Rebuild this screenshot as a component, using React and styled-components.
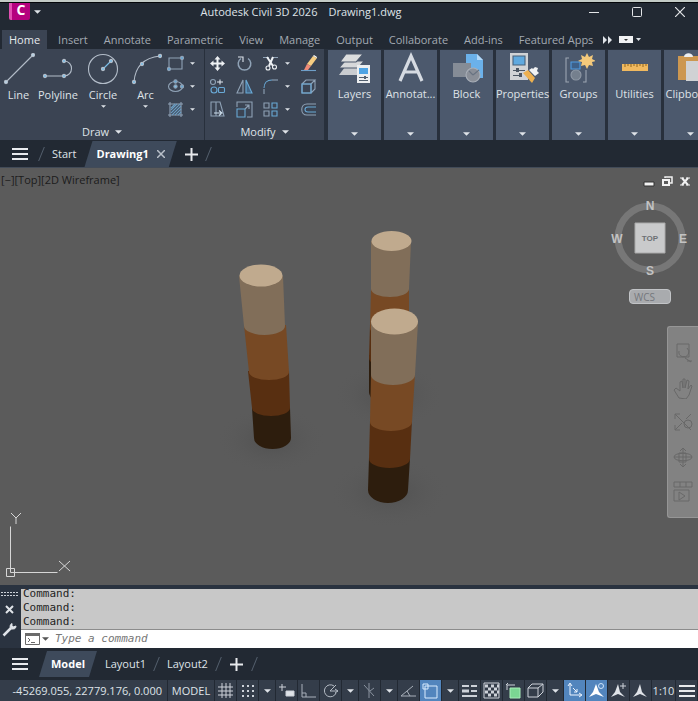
import React, { useState } from 'react';
import styled, { createGlobalStyle, css } from 'styled-components';

const GlobalStyle = createGlobalStyle`
  * {
    box-sizing: border-box;
  }
  body {
    margin: 0;
    background: #222933;
    font-family: "Open Sans", "Noto Sans", sans-serif;
    font-size: 11px;
    line-height: 16px;
    color: #dfe3e8;
  }
  button, input {
    font: inherit;
    color: inherit;
    border: 0;
    margin: 0;
    padding: 0;
    background: none;
  }
  svg {
    display: block;
    flex: none;
  }
`;

const Window = styled.div`
  display: flex;
  flex-direction: column;
  min-height: 100vh;
  overflow: hidden;
  background: #222933;
  border-top: 2px solid #c3cbc6;
`;

/* ---------- title bar ---------- */

const TitleBar = styled.header`
  display: flex;
  align-items: flex-start;
  height: 28px;
  border-top: 1px solid #05070a;
`;

const AppButton = styled.button`
  display: flex;
  align-items: center;
  gap: 4px;
  padding-left: 9px;
  width: 45px;
`;

const AppLogo = styled.span`
  width: 21px;
  height: 17px;
  background: #b5007e;
  border-left: 3px solid #e14fb2;
  border-radius: 0 0 2px 2px;
  color: #fff;
  font-size: 14px;
  font-weight: 700;
  line-height: 14px;
`;

const Title = styled.h1`
  flex: 1;
  display: flex;
  justify-content: center;
  gap: 11px;
  margin: 0;
  padding: 1px 19px 0 0;
  font-size: 11px;
  font-weight: 400;
  white-space: nowrap;
`;

const WindowButtons = styled.div`
  display: flex;
  gap: 7px;
`;

const WindowButton = styled.button`
  display: flex;
  justify-content: center;
  align-items: center;
  width: 36px;
  height: 18px;
`;

/* ---------- ribbon ---------- */

const RibbonTabs = styled.nav`
  display: flex;
  height: 19px;
  padding-left: 2px;
  white-space: nowrap;
`;

const RibbonTab = styled.button`
  flex: none;
  height: 19px;
  padding: 0 ${p => (p.$active ? '7px' : '8px')};
  margin-right: ${p => (p.$active ? '3px' : '0')};
  color: ${p => (p.$active ? '#e6e9ed' : '#a3a9b2')};
  background: ${p => (p.$active ? '#3b4453' : 'transparent')};
`;

const TabTools = styled.div`
  display: flex;
  align-items: center;
  gap: 5px;
  padding-left: 2px;
`;

const Ribbon = styled.section`
  display: flex;
  height: 91px;
  overflow: hidden;
  background: #28303c;
`;

const Panel = styled.div`
  display: flex;
  flex-direction: column;
  flex: none;
  width: ${p => p.$width};
  margin-right: ${p => p.$gap || '1px'};
  background: #3b4453;
`;

const PanelBody = styled.div`
  display: flex;
  flex: 1;
  padding-top: 3px;
`;

const PanelTitle = styled.button`
  display: flex;
  justify-content: center;
  align-items: center;
  gap: 6px;
  height: 16px;
`;

const BigTool = styled.button`
  display: flex;
  flex-direction: column;
  align-items: center;
  flex: none;
  width: ${p => p.$width};
  height: 62px;
  padding-top: 1px;
  gap: 2px;
`;

const ToolGrid = styled.div`
  display: grid;
  grid-template-columns: ${p => p.$columns};
  grid-auto-rows: 23px;
  align-content: start;
`;

const SmallTool = styled.button`
  display: flex;
  align-items: center;
  justify-content: ${p => (p.$menu ? 'flex-start' : 'center')};
  gap: 6px;
  padding-left: ${p => (p.$menu ? '3px' : '0')};
`;

const Tile = styled.button`
  display: flex;
  flex-direction: column;
  align-items: center;
  flex: none;
  gap: 2px;
  width: 53px;
  height: 90px;
  margin: 1px 3px 0 0;
  padding: 2px 0 4px;
  background: #4c596d;
  white-space: nowrap;
  span {
    flex: 1;
  }
`;

/* ---------- slanted tab rows ---------- */

const SheetTabs = styled.nav`
  display: flex;
  align-items: flex-end;
  height: ${p => p.$height};
  background: #222933;
`;

const MenuButton = styled.button`
  display: flex;
  align-items: center;
  justify-content: center;
  width: ${p => p.$width};
  height: 26px;
`;

const SheetTab = styled.button`
  display: flex;
  align-items: center;
  justify-content: center;
  gap: 8px;
  height: 26px;
  padding: 0 ${p => (p.$active ? '12px' : '8px')};
  ${p =>
    p.$active &&
    css`
      background: #3e4a5b;
      color: #fff;
      font-weight: 700;
      clip-path: polygon(8px 0, 100% 0, calc(100% - 8px) 100%, 0 100%);
    `}
`;

const Slash = styled.span`
  width: 1px;
  height: 14px;
  margin: 0 2px 6px;
  background: #55606e;
  transform: skewX(-22deg);
`;

/* ---------- model view ---------- */

const Viewport = styled.main`
  position: relative;
  flex: 1;
  min-height: 300px;
  background: #5b5b5b;
  border-top: 1px solid #424b58;
`;

const Scene = styled.svg`
  position: absolute;
  inset: 0;
  width: 100%;
  height: 100%;
`;

const ViewLabel = styled.div`
  position: absolute;
  top: 4px;
  left: 1px;
  color: #1c1c1c;
`;

const ViewButtons = styled.div`
  position: absolute;
  top: 8px;
  right: 7px;
  display: flex;
  gap: 6px;
`;

const Compass = styled.div`
  position: absolute;
  top: 30px;
  right: 8px;
  display: flex;
  flex-direction: column;
  align-items: center;
  gap: 11px;
`;

const WcsButton = styled.button`
  width: 42px;
  height: 15px;
  padding-left: 4px;
  border: 1px solid #c2c4c7;
  border-radius: 4px;
  background: #a9abae;
  color: #74777c;
  font-size: 10px;
  line-height: 12px;
  text-align: left;
`;

const NavBar = styled.div`
  position: absolute;
  top: 158px;
  right: 0;
  display: flex;
  flex-direction: column;
  align-items: center;
  justify-content: space-between;
  width: 31px;
  height: 192px;
  padding: 16px 0 15px;
  background: #828282;
  border: 1px solid #969696;
  border-right: 0;
  border-radius: 3px 0 0 3px;
`;

const UcsIcon = styled.svg`
  position: absolute;
  left: 3px;
  bottom: 3px;
`;

/* ---------- command line ---------- */

const CommandPanel = styled.section`
  display: flex;
  height: 63px;
  padding-top: 4px;
  background: #2a3340;
`;

const CommandSide = styled.div`
  display: flex;
  flex-direction: column;
  align-items: center;
  width: 21px;
  padding: 3px 2px 0 0;
  gap: 8px;
`;

const CommandMain = styled.div`
  flex: 1;
  display: flex;
  flex-direction: column;
  font-family: "DejaVu Sans Mono", monospace;
  line-height: 14px;
`;

const CommandLog = styled.div`
  display: flex;
  flex-direction: column;
  justify-content: flex-end;
  height: 40px;
  padding-left: 2px;
  overflow: hidden;
  background: #c8c8c8;
  color: #1f1f1f;
`;

const CommandEntry = styled.label`
  display: flex;
  align-items: center;
  flex: 1;
  gap: 2px;
  padding-left: 4px;
  background: #fff;
  border-top: 1px solid #8c8c8c;
  input {
    flex: 1;
    margin-left: 4px;
    outline: 0;
    color: #222;
  }
  input::placeholder {
    color: #777;
    font-style: italic;
    opacity: 1;
  }
`;

/* ---------- status bar ---------- */

const StatusBar = styled.footer`
  display: flex;
  height: 21px;
  margin-top: 3px;
  background: #222933;
  white-space: nowrap;
`;

const Coordinates = styled.button`
  flex: 1;
  margin-right: 1px;
  padding-right: 5px;
  background: #343d4a;
  text-align: right;
`;

const StatusText = styled.button`
  flex: none;
  width: ${p => p.$width};
  margin-right: 1px;
  background: #343d4a;
`;

const StatusButton = styled.button`
  display: flex;
  align-items: center;
  justify-content: center;
  flex: none;
  width: 21px;
  margin-right: 1px;
  background: ${p => (p.$active ? '#5285bd' : '#343d4a')};
`;

const StatusCaret = styled(StatusButton)`
  width: 16px;
`;

/* ---------- drawings ---------- */

const Caret = ({ size = 7, color = '#dfe3e8' }) => (
  <svg width={size} height={size / 2 + 0.5} viewBox="0 0 8 4" fill={color}>
    <path d="M0 0h8L4 4z" />
  </svg>
);

const Dot = ({ x, y, fill = '#7cc0ea' }) => <circle cx={x} cy={y} r="1.6" fill={fill} />;

const BigIcon = ({ children }) => (
  <svg width="32" height="32" viewBox="0 0 32 32" fill="none" stroke="#b3bdc9" strokeWidth="1.1">
    {children}
  </svg>
);

const SmallIcon = ({ children }) => (
  <svg width="17" height="17" viewBox="0 0 17 17" fill="none" stroke="#8fa2b6" strokeWidth="1.1">
    {children}
  </svg>
);

const BarsIcon = () => (
  <svg width="16" height="12" viewBox="0 0 16 12" fill="#e8eaed">
    <path d="M0 0h16v2H0zM0 5h16v2H0zM0 10h16v2H0z" />
  </svg>
);

const PlusIcon = () => (
  <svg width="13" height="13" viewBox="0 0 13 13" stroke="#e8eaed" strokeWidth="2">
    <path d="M6.5 0v13M0 6.5h13" />
  </svg>
);

const drawTools = [
  {
    name: 'Line',
    width: '37px',
    icon: (
      <>
        <path d="M3 29L30 2" />
        <Dot x={3} y={29} fill="#b9d3e6" />
        <Dot x={30} y={2} fill="#b9d3e6" />
      </>
    ),
  },
  {
    name: 'Polyline',
    width: '42px',
    icon: (
      <>
        <path d="M2 23h20c10 0 10-15 0-15" />
        <Dot x={3} y={23} />
        <Dot x={22} y={23} />
        <Dot x={22} y={8} />
      </>
    ),
  },
  {
    name: 'Circle',
    width: '48px',
    menu: true,
    icon: (
      <>
        <circle cx="16" cy="16" r="14.5" />
        <path d="M16 16l8-8" stroke="#7cc0ea" />
        <Dot x={16} y={16} />
        <Dot x={24} y={8} />
      </>
    ),
  },
  {
    name: 'Arc',
    width: '37px',
    menu: true,
    icon: (
      <>
        <path d="M4 29C5 15 12 5 30 3" />
        <Dot x={4} y={29} />
        <Dot x={12} y={11} />
        <Dot x={30} y={3} />
      </>
    ),
  },
];

const shapeTools = [
  {
    name: 'Rectangle',
    icon: (
      <>
        <path d="M2 3h13v11H2z" />
        <Dot x={2} y={14} fill="#69a9d6" />
        <Dot x={15} y={3} fill="#69a9d6" />
      </>
    ),
  },
  {
    name: 'Ellipse',
    icon: (
      <>
        <ellipse cx="8.500" cy="8.500" rx="7" ry="5" />
        <Dot x={8.5} y={8.5} />
        <Dot x={8.5} y={3.5} fill="#69a9d6" />
        <Dot x={15} y={8.5} fill="#69a9d6" />
      </>
    ),
  },
  {
    name: 'Hatch',
    icon: (
      <>
        <path d="M3 1v15M14 1v15M1 3h15M1 14h15" />
        <path
          d="M4 7l4-4M4 9l6-6M4 12l9-9M5 14l9-9M8 14l6-6M11 14l3-3"
          stroke="#6b9cc0"
        />
      </>
    ),
  },
];

const modifyTools = [
  {
    name: 'Move',
    icon: (
      <g fill="#eef1f4" stroke="none">
        <path d="M8.500 1l3 3.500h-2V7.500h3v-2L16 8.500l-3.500 3v-2h-3v3h2L8.500 16l-3-3.500h2v-3h-3v2L1 8.500l3.500-3v2h3v-3h-2z" />
      </g>
    ),
  },
  {
    name: 'Rotate',
    icon: (
      <>
        <path d="M5 3.500A6.300 6.300 0 1 0 12 3.500" strokeWidth="1.500" />
        <path d="M2 2l5 0v5" stroke="#dfe6ee" />
      </>
    ),
  },
  {
    name: 'Trim',
    menu: true,
    icon: (
      <>
        <path d="M1 2.500h6M11 2.500h5" />
        <path d="M5 2l6 9M11 2L7 11" stroke="#eef1f4" strokeWidth="2" />
        <circle cx="6" cy="13" r="2" stroke="#eef1f4" />
        <circle cx="12.500" cy="12" r="2" stroke="#eef1f4" />
      </>
    ),
  },
  {
    name: 'Erase',
    icon: (
      <>
        <path d="M1 15.500h15" stroke="#6f9fc8" />
        <path d="M13 1l4 2-6 8-4-2z" fill="#f6cd82" stroke="none" />
        <path d="M7 9l4 2-3 4H4z" fill="#ef8b77" stroke="none" />
        <path d="M13 1l1-1 3 2v1z" fill="#fff" stroke="none" />
      </>
    ),
  },
  {
    name: 'Copy',
    icon: (
      <>
        <circle cx="4" cy="4" r="2.500" />
        <circle cx="5" cy="12" r="3" stroke="#69a9d6" />
        <rect x="9.500" y="9.500" width="6" height="5" rx="1" stroke="#69a9d6" />
        <path d="M8 4h6M11 1.500v5" stroke="#dfe6ee" />
      </>
    ),
  },
  {
    name: 'Mirror',
    icon: (
      <>
        <path d="M7 2v13H1z" />
        <path d="M10 2v13h6z" stroke="#69a9d6" fill="#44688a" />
      </>
    ),
  },
  {
    name: 'Fillet',
    menu: true,
    icon: (
      <>
        <path d="M2 16v-5" />
        <path d="M2 10C2 5 5 2 10 2" stroke="#69a9d6" />
        <path d="M10 2h6" />
      </>
    ),
  },
  {
    name: 'Explode',
    icon: (
      <>
        <path d="M2 6h9v9H2zM2 6l4-4h9l-4 4M15 2v9l-4 4" />
        <path d="M2 6h9v9H2z" stroke="#69a9d6" />
      </>
    ),
  },
  {
    name: 'Stretch',
    icon: (
      <>
        <path d="M2 1h5v14H2zM7 1h4l4 14H2" />
        <path d="M5 12h7M10 9.500l3 2.500-3 2.500" stroke="#cfe0ee" />
      </>
    ),
  },
  {
    name: 'Scale',
    icon: (
      <>
        <path d="M1 6V1h15v15h-5" />
        <path d="M1 8h8v8H1z" stroke="#69a9d6" />
        <path d="M9 8l4-4M9 4h4v4" />
      </>
    ),
  },
  {
    name: 'Array',
    menu: true,
    icon: (
      <>
        <path d="M2 2h5v5H2zM2 10h5v5H2z" />
        <path d="M10 2h5v5h-5zM10 10h5v5h-5z" stroke="#69a9d6" />
      </>
    ),
  },
  {
    name: 'Offset',
    icon: (
      <>
        <path d="M16 3H7C0 3 0 14 7 14h9" />
        <path d="M16 6H8c-4 0-4 5 0 5h8" stroke="#69a9d6" />
      </>
    ),
  },
];

const tiles = [
  {
    name: 'Layers',
    icon: (
      <g stroke="none">
        <path d="M6 15h20l-7 8H0z" fill="#c9ccd0" />
        <path d="M6 9h19l-6 7H0z" fill="#d6d8da" stroke="#4c596d" />
        <path d="M7 2h17l-7 8H1z" fill="#dcdedf" stroke="#4c596d" />
        <path d="M18 13h13v18H18z" fill="#eceef0" />
        <path d="M20 16h9v6h-9z" fill="#4da3e4" />
        <path d="M20 25h9v1h-9zM20 28h9v1h-9zM25 24h2v3h-2z" fill="#52606f" />
      </g>
    ),
  },
  {
    name: 'Annotat...',
    icon: <path d="M5 29L16 4 27 29M9 20h14" stroke="#d6dbe2" strokeWidth="3.200" />,
  },
  {
    name: 'Block',
    icon: (
      <g stroke="none">
        <path d="M15 2h11l6 6v18H15z" fill="#6bb1ea" />
        <path d="M26 2v6h6z" fill="#b5dafa" />
        <path d="M2 11h18v14H2z" fill="#858c96" />
        <circle cx="22" cy="23" r="7" fill="#8a8f98" stroke="#a9afb8" />
        <path d="M22 23l6-5M22 23l-4-4" stroke="#687382" fill="none" />
      </g>
    ),
  },
  {
    name: 'Properties',
    icon: (
      <g stroke="none">
        <path d="M3 1h18v27H3z" fill="#d0d3d6" />
        <path d="M6 4h12v9H6z" fill="#5fa9df" stroke="#49627a" />
        <path d="M6 18h12v1H6zM6 23h9v1H6z" fill="#4b5663" />
        <path d="M9 16h3v4H9zM12 21h3v4h-3z" fill="#4b5663" />
        <path d="M16 21l5-3 7 8-3 5z" fill="#edb04f" />
        <path d="M22 18l6 6 4-3-2-2 1-3-3-1-2 2-1-1z" fill="#f1f2f3" />
      </g>
    ),
  },
  {
    name: 'Groups',
    icon: (
      <>
        <path d="M6 6H3v24h3M20 30h3V18" stroke="#9ba5b2" />
        <path d="M8 10h9v7H8z" stroke="#4e9be2" fill="#3e6088" />
        <circle cx="13" cy="23" r="5" fill="#75808e" stroke="#8e98a5" />
        <path
          d="M24 1l2 4 4-2-1 4 4 2-4 1 1 4-4-1-2 4-2-4-4 1 1-4-4-1 4-2-1-4 4 2z"
          fill="#f3c97b"
          stroke="none"
        />
      </>
    ),
  },
  {
    name: 'Utilities',
    icon: (
      <>
        <path d="M3 12h26v7H3z" fill="#f0b95f" stroke="none" />
        <path d="M6 12v3M9 12v2M12 12v3M15 12v2M18 12v3M21 12v2M24 12v3M27 12v2" stroke="#9a6d24" />
      </>
    ),
  },
  {
    name: 'Clipboard',
    icon: (
      <g stroke="none">
        <path d="M3 4h22v24H3z" fill="#cc9750" />
        <path d="M9 5c0-5 9-5 9 0z" fill="#eceef0" />
        <path d="M11 9h20v20H11z" fill="#d0d2d4" />
      </g>
    ),
  },
];

// top: cx, cy, rx, ry of the head; every band: left x, right x, y at its start and end, and its sag
const piles = [
  {
    top: [391.5, 241, 20, 10],
    bands: [
      { color: '#2d1d0d', from: [369, 408, 355], to: [369, 407, 392], sag: 12 },
      { color: '#582f11', from: [370, 409, 325], to: [369, 408, 358], sag: 9 },
      { color: '#774924', from: [371, 409, 289], to: [370, 409, 328], sag: 9 },
      { color: '#816e59', from: [371, 411, 241], to: [371, 409, 289], sag: 8 },
    ],
  },
  {
    top: [261, 275.5, 21.5, 11],
    bands: [
      { color: '#2d1d0d', from: [252, 290, 408], to: [254, 291, 438], sag: 11 },
      { color: '#582f11', from: [248, 289, 371], to: [252, 290, 408], sag: 8 },
      { color: '#774924', from: [244, 286, 325], to: [249, 289, 372], sag: 8 },
      { color: '#816e59', from: [239, 283, 276], to: [244, 285, 326], sag: 9 },
    ],
  },
  {
    top: [394.5, 321.5, 23.5, 13],
    bands: [
      { color: '#2d1d0d', from: [369, 410, 458], to: [368, 408, 490], sag: 13 },
      { color: '#582f11', from: [370, 412, 421], to: [369, 410, 459], sag: 9 },
      { color: '#774924', from: [371, 415, 374], to: [370, 412, 422], sag: 9 },
      { color: '#816e59', from: [371, 418, 322], to: [371, 415, 375], sag: 10 },
    ],
  },
];

function Pile({ top, bands }) {
  const [cx, cy, rx, ry] = top;
  return (
    <g>
      {bands.map(({ color, from, to, sag }) => (
        <path
          key={color}
          fill={color}
          d={`M${from[0]} ${from[2]}L${to[0]} ${to[2]}A${(to[1] - to[0]) / 2} ${sag} 0 0 0 ${to[1]} ${to[2]}L${from[1]} ${from[2]}z`}
        />
      ))}
      <ellipse cx={cx} cy={cy} rx={rx} ry={ry} fill="#c0aa8e" />
    </g>
  );
}

const navTools = [
  { name: 'Full navigation wheel', d: 'M4 1h12v13H4zM6 8a5 5 0 1 0 8-3M12 15l6 4M14 18h5' },
  { name: 'Pan', d: 'M6 20l-5-8 2-2 4 3V4l2-1 1 7V1h2v9l2-8 2 1-1 8 3-4 1 1-3 9-3 4z' },
  { name: 'Zoom extents', d: 'M2 2l16 16M2 7V2h5M2 18l7-7M2 13v5h5M18 2l-5 5M11 12a4 4 0 1 0 8 0 4 4 0 0 0-8 0' },
  { name: 'Orbit', d: 'M10 1v19M7 4l3-3 3 3M7 17l3 3 3-3M1 10h18M1 10c0-5 18-5 18 0s-18 5-18 0M6 6v9h7V6z' },
  { name: 'Show motion', d: 'M1 1h18v5H1zM7 1v5M13 1v5M1 9h15v11H1zM6 11l6 4-6 4z' },
];

const statusTools = [
  { name: 'Grid', icon: <path d="M1 5h15M1 9h15M1 13h15M5 1v15M9 1v15M13 1v15" /> },
  {
    name: 'Snap mode',
    menu: true,
    icon: <path d="M3 4h13M3 9h13M3 14h13" strokeWidth="2" strokeDasharray="2 3" />,
  },
  {
    name: 'Dynamic input',
    icon: (
      <>
        <path d="M4 2v7M1 5h7" />
        <path d="M8 9h8v5H8z" fill="#dfe3e8" />
      </>
    ),
  },
  { name: 'Ortho', icon: <path d="M2 2v13h14M2 11h4v4" stroke="#a9b1bb" /> },
  {
    name: 'Polar tracking',
    menu: true,
    icon: <path d="M12 4a6 6 0 1 0 2 7M8 9l6-6M8 9h8M13 7l3 2-3 2" stroke="#b4bbc4" />,
  },
  { name: 'Isodraft', menu: true, icon: <path d="M8 1v15M3 3l10 11M13 6l-4 3" stroke="#8a939f" /> },
  { name: 'Object snap tracking', icon: <path d="M16 14H1L13 4M7 9l3 5" stroke="#a9b1bb" /> },
  {
    name: 'Object snap',
    active: true,
    menu: true,
    icon: <path d="M3 4h12v12H3zM1 2h5v5H1z" stroke="#d9ecff" />,
  },
  {
    name: 'Lineweight',
    icon: (
      <>
        <path d="M1 4h7M10 4h6M1 9h7M10 9h6M1 14h15" strokeWidth="2" />
        <path d="M1 9h7" strokeWidth="3" />
      </>
    ),
  },
  {
    name: 'Transparency',
    icon: (
      <>
        <path d="M1 1h15v15H1z" />
        <path d="M2 4h14M2 10h14" strokeWidth="3" strokeDasharray="3 3" />
        <path d="M5 7h11M5 13h11" strokeWidth="3" strokeDasharray="3 3" />
      </>
    ),
  },
  {
    name: 'Selection cycling',
    icon: (
      <>
        <path d="M2 3h8M2 3v5M1 3l2-2" />
        <path d="M5 6h10v10H5z" fill="#7bd693" stroke="#a9edb9" />
      </>
    ),
  },
  { name: '3D object snap', menu: true, icon: <path d="M1 6h10v9H1zM1 6l4-4h11l-5 4M16 2v8l-5 5" /> },
  {
    name: 'Dynamic UCS',
    active: true,
    icon: (
      <>
        <path d="M4 2v11h11M2 4l2-3 2 3M13 11l3 2-3 2" stroke="#eef5ff" />
        <path d="M7 6l4 4M11 7v3H8" stroke="#eef5ff" />
      </>
    ),
  },
  {
    name: 'Annotation visibility',
    active: true,
    icon: (
      <>
        <path d="M8 2l3 8 5 5-8-3-7 3 4-5z" fill="#fff" stroke="none" />
        <circle cx="13" cy="4" r="2.500" stroke="#cde4fb" />
      </>
    ),
  },
  {
    name: 'Auto scale',
    icon: (
      <>
        <path d="M8 2l2 8 5 5-7-3-7 3 4-5z" fill="#dfe3e8" stroke="none" />
        <path d="M13 1v6M10 4h6" />
      </>
    ),
  },
  {
    name: 'Annotation scale',
    icon: <path d="M8 2l2 8 5 5-7-3-7 3 4-5z" fill="#dfe3e8" stroke="none" />,
  },
];

const ribbonTabs = [
  'Home',
  'Insert',
  'Annotate',
  'Parametric',
  'View',
  'Manage',
  'Output',
  'Collaborate',
  'Add-ins',
  'Featured Apps',
];

function ModelView() {
  return (
    <Viewport>
      <Scene viewBox="0 168 698 417" preserveAspectRatio="xMidYMid meet" aria-label="Model">
        <defs>
          <radialGradient id="shade">
            <stop offset="0" stopColor="#444" stopOpacity="0.5" />
            <stop offset="1" stopColor="#5b5b5b" stopOpacity="0" />
          </radialGradient>
        </defs>
        <ellipse cx="271" cy="440" rx="55" ry="34" fill="url(#shade)" />
        <ellipse cx="389" cy="395" rx="55" ry="34" fill="url(#shade)" />
        <ellipse cx="389" cy="492" rx="60" ry="36" fill="url(#shade)" />
        {piles.map(pile => (
          <Pile key={pile.top[0]} {...pile} />
        ))}
      </Scene>
      <ViewLabel>[−][Top][2D Wireframe]</ViewLabel>
      <ViewButtons>
        <button aria-label="Minimize drawing">
          <svg width="12" height="11" viewBox="0 0 12 11">
            <path d="M1 6h10v4H1z" fill="#f2f2f2" stroke="#333" />
          </svg>
        </button>
        <button aria-label="Restore drawing">
          <svg width="12" height="11" viewBox="0 0 12 11" fill="none" stroke="#f2f2f2" strokeWidth="2">
            <path d="M4 2V1h7v6h-2" strokeWidth="1.500" />
            <path d="M2 4h6v5H2z" />
          </svg>
        </button>
        <button aria-label="Close drawing">
          <svg width="12" height="11" viewBox="0 0 12 11" stroke="#f2f2f2" strokeWidth="2">
            <path d="M3 2l6 7M9 2L3 9" />
            <path d="M1 2h4M7 2h4M1 9h4M7 9h4" strokeWidth="1" />
          </svg>
        </button>
      </ViewButtons>
      <Compass>
        <svg
          width="80"
          height="80"
          viewBox="0 0 80 80"
          fontFamily="Liberation Sans, sans-serif"
          fontSize="12"
          fontWeight="700"
          fill="#c3c3c3"
          textAnchor="middle"
        >
          <circle cx="40" cy="40" r="32" fill="none" stroke="#777" strokeWidth="7" />
          <path d="M25 25h30v30H25z" fill="#c9cacb" stroke="#aaa" />
          <text x="40" y="43" fontSize="8" fill="#6d7074">TOP</text>
          <text x="40" y="12">N</text>
          <text x="7" y="45">W</text>
          <text x="73" y="45">E</text>
          <text x="40" y="77">S</text>
        </svg>
        <WcsButton>WCS</WcsButton>
      </Compass>
      <NavBar>
        {navTools.map(({ name, d }) => (
          <button key={name} aria-label={name}>
            <svg width="20" height="21" viewBox="0 0 20 21" fill="none" stroke="#686868">
              <path d={d} />
            </svg>
          </button>
        ))}
      </NavBar>
      <UcsIcon width="70" height="70" viewBox="0 0 70 70" fill="none" stroke="#d6d6d6" strokeWidth="1">
        <path d="M7.500 14.500v46h47M3.500 56.500h8v8h-8z" />
        <path d="M8 1l5 5 5-5M13 6v6M56 49l11 10M67 49L56 59" />
      </UcsIcon>
    </Viewport>
  );
}

function App() {
  const [command, setCommand] = useState('');

  return (
    <>
      <GlobalStyle />
      <Window>
        <TitleBar>
          <AppButton aria-label="Application menu">
            <AppLogo>C</AppLogo>
            <Caret />
          </AppButton>
          <Title>
            <span>Autodesk Civil 3D 2026</span>
            <span>Drawing1.dwg</span>
          </Title>
          <WindowButtons>
            <WindowButton aria-label="Minimize">
              <svg width="10" height="10" viewBox="0 0 10 10" stroke="#e3e5e8">
                <path d="M0 5.500h10" />
              </svg>
            </WindowButton>
            <WindowButton aria-label="Maximize">
              <svg width="10" height="10" viewBox="0 0 10 10" fill="none" stroke="#e3e5e8">
                <rect x="0.500" y="0.500" width="9" height="9" rx="1" />
              </svg>
            </WindowButton>
            <WindowButton aria-label="Close">
              <svg width="10" height="10" viewBox="0 0 10 10" stroke="#e3e5e8" strokeWidth="1.200">
                <path d="M0 0l10 10M10 0L0 10" />
              </svg>
            </WindowButton>
          </WindowButtons>
        </TitleBar>

        <RibbonTabs>
          {ribbonTabs.map(tab => (
            <RibbonTab key={tab} $active={tab === 'Home'}>
              {tab}
            </RibbonTab>
          ))}
          <TabTools>
            <button aria-label="More tabs">
              <svg width="9" height="8" viewBox="0 0 9 8" fill="#dfe3e8">
                <path d="M0 0l4 4-4 4zM5 0l4 4-4 4z" />
              </svg>
            </button>
            <button aria-label="Ribbon display">
              <svg width="24" height="7" viewBox="0 0 24 7">
                <path d="M2 0h14v7H2z" fill="#f0f1f3" />
                <path d="M7 3h4L9 5z" fill="#333" />
                <path d="M19 2h5l-2.500 3z" fill="#dfe3e8" />
              </svg>
            </button>
          </TabTools>
        </RibbonTabs>

        <Ribbon>
          <Panel $width="204px">
            <PanelBody>
              {drawTools.map(({ name, width, icon, menu }) => (
                <BigTool key={name} $width={width}>
                  <BigIcon>{icon}</BigIcon>
                  <span>{name}</span>
                  {menu && <Caret size={5} />}
                </BigTool>
              ))}
              <ToolGrid $columns="36px">
                {shapeTools.map(({ name, icon }) => (
                  <SmallTool key={name} aria-label={name} $menu>
                    <SmallIcon>{icon}</SmallIcon>
                    <Caret size={5} />
                  </SmallTool>
                ))}
              </ToolGrid>
            </PanelBody>
            <PanelTitle>
              Draw <Caret />
            </PanelTitle>
          </Panel>
          <Panel $width="119px" $gap="4px">
            <PanelBody>
              <ToolGrid $columns="24px 30px 36px 26px">
                {modifyTools.map(({ name, icon, menu }) => (
                  <SmallTool key={name} aria-label={name} $menu={menu}>
                    <SmallIcon>{icon}</SmallIcon>
                    {menu && <Caret size={5} />}
                  </SmallTool>
                ))}
              </ToolGrid>
            </PanelBody>
            <PanelTitle>
              Modify <Caret />
            </PanelTitle>
          </Panel>
          {tiles.map(({ name, icon }) => (
            <Tile key={name}>
              <BigIcon>{icon}</BigIcon>
              <span>{name}</span>
              <Caret />
            </Tile>
          ))}
        </Ribbon>

        <SheetTabs $height="27px">
          <MenuButton $width="39px" aria-label="Drawing list">
            <BarsIcon />
          </MenuButton>
          <Slash />
          <SheetTab>Start</SheetTab>
          <SheetTab $active>
            Drawing1
            <svg width="8" height="8" viewBox="0 0 8 8" stroke="#b9c0c9" strokeWidth="1.500">
              <path d="M0 0l8 8M8 0L0 8" />
            </svg>
          </SheetTab>
          <MenuButton $width="29px" aria-label="New drawing">
            <PlusIcon />
          </MenuButton>
          <Slash />
        </SheetTabs>

        <ModelView />

        <CommandPanel>
          <CommandSide>
            <svg width="17" height="5" viewBox="0 0 17 5" stroke="#cdd2d8" strokeDasharray="2 1">
              <path d="M0 .5h17M0 3.500h17" />
            </svg>
            <button aria-label="Close command line">
              <svg width="9" height="9" viewBox="0 0 9 9" stroke="#dfe3e8" strokeWidth="2">
                <path d="M1 1l7 7M8 1L1 8" />
              </svg>
            </button>
            <button aria-label="Customize">
              <svg width="15" height="15" viewBox="0 0 15 15" fill="none" stroke="#dfe3e8">
                <path d="M1.500 13.500L9 6" strokeWidth="2.500" />
                <path d="M10 1.500C7 3 8 7 10 7s4 0 4-3l-3 1-1-1z" fill="#dfe3e8" />
              </svg>
            </button>
          </CommandSide>
          <CommandMain>
            <CommandLog>
              <div>Command:</div>
              <div>Command:</div>
              <div>Command:</div>
            </CommandLog>
            <CommandEntry>
              <svg width="15" height="12" viewBox="0 0 15 12" fill="none" stroke="#6b6b6b">
                <path d="M.5 .5h14v11H.5z" />
                <path d="M0 1.500h15" strokeWidth="3" />
                <path d="M3 5l2 2-2 2M6 9.500h4" />
              </svg>
              <Caret color="#555" />
              <input
                aria-label="Command"
                placeholder="Type a command"
                value={command}
                onChange={e => setCommand(e.target.value)}
              />
            </CommandEntry>
          </CommandMain>
        </CommandPanel>

        <SheetTabs $height="29px">
          <MenuButton $width="39px" aria-label="Layout list">
            <BarsIcon />
          </MenuButton>
          <SheetTab $active>Model</SheetTab>
          <SheetTab>Layout1</SheetTab>
          <Slash />
          <SheetTab>Layout2</SheetTab>
          <Slash />
          <MenuButton $width="31px" aria-label="New layout">
            <PlusIcon />
          </MenuButton>
          <Slash />
        </SheetTabs>

        <StatusBar>
          <Coordinates>-45269.055, 22779.176, 0.000</Coordinates>
          <StatusText $width="46px">MODEL</StatusText>
          {statusTools.map(({ name, icon, active, menu }) => (
            <React.Fragment key={name}>
              <StatusButton aria-label={name} $active={active}>
                <svg width="17" height="17" viewBox="0 0 17 17" fill="none" stroke="#cdd2d9">
                  {icon}
                </svg>
              </StatusButton>
              {menu && (
                <StatusCaret aria-label={name + ' settings'}>
                  <Caret />
                </StatusCaret>
              )}
            </React.Fragment>
          ))}
          <StatusText $width="23px">1:10</StatusText>
          <StatusButton aria-label="Customization">
            <BarsIcon />
          </StatusButton>
        </StatusBar>
      </Window>
    </>
  );
}

export default App;
